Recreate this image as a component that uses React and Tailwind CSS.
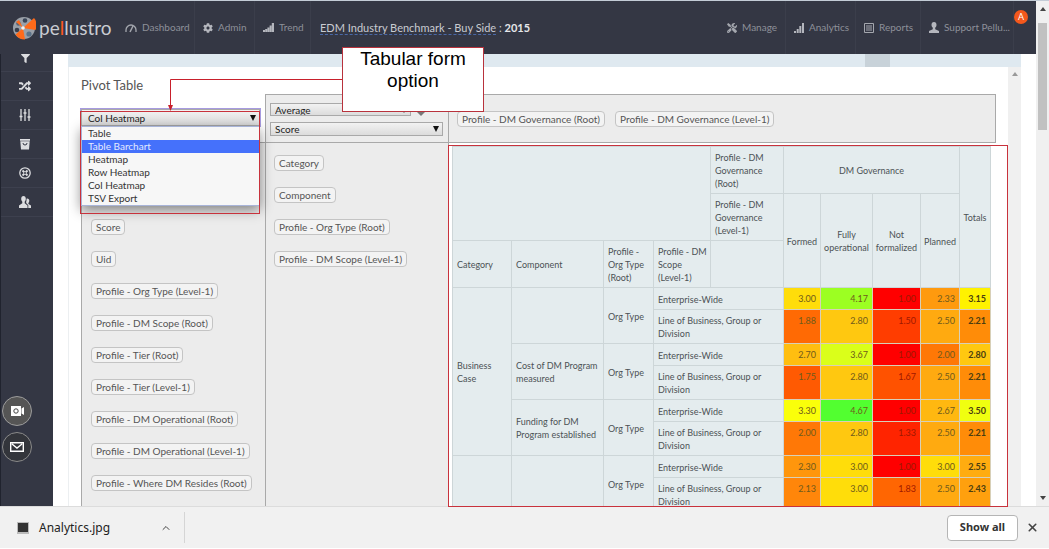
import React from "react";
import { FaFilter, FaRandom, FaCog, FaTools } from "react-icons/fa";
import { FiChevronUp, FiX } from "react-icons/fi";

const unusedAttributes = [
  "Score", "Uid", "Profile - Org Type (Level-1)", "Profile - DM Scope (Root)", "Profile - Tier (Root)",
  "Profile - Tier (Level-1)", "Profile - DM Operational (Root)", "Profile - DM Operational (Level-1)",
  "Profile - Where DM Resides (Root)",
];
const rowAttributes = ["Category", "Component", "Profile - Org Type (Root)", "Profile - DM Scope (Level-1)"];
const colAttributes = ["Profile - DM Governance (Root)", "Profile - DM Governance (Level-1)"];
const renderers = ["Table", "Table Barchart", "Heatmap", "Row Heatmap", "Col Heatmap", "TSV Export"];

const groups = [
  {
    category: { text: "Business Case", span: 6 }, component: "",
    a: [["3.00", "bg-[#ffdd0a]"], ["4.17", "bg-[#9cff22]"], ["1.00", "bg-[#ff0000]"], ["2.33", "bg-[#ff9a0e]"], ["3.15", "bg-[#fff200]"]],
    b: [["1.88", "bg-[#ff6a04]"], ["2.80", "bg-[#ffc810]"], ["1.50", "bg-[#ff3d00]"], ["2.50", "bg-[#ffaa10]"], ["2.21", "bg-[#ff8c08]"]],
  },
  {
    component: "Cost of DM Program measured",
    a: [["2.70", "bg-[#ffbe10]"], ["3.67", "bg-[#daff1a]"], ["1.00", "bg-[#ff0000]"], ["2.00", "bg-[#ff7806]"], ["2.80", "bg-[#ffc810]"]],
    b: [["1.75", "bg-[#ff5a02]"], ["2.80", "bg-[#ffc810]"], ["1.67", "bg-[#ff5200]"], ["2.50", "bg-[#ffaa10]"], ["2.21", "bg-[#ff8c08]"]],
  },
  {
    component: "Funding for DM Program established",
    a: [["3.30", "bg-[#faff0a]"], ["4.67", "bg-[#52ff30]"], ["1.00", "bg-[#ff0000]"], ["2.67", "bg-[#ffb810]"], ["3.50", "bg-[#f0ff10]"]],
    b: [["2.00", "bg-[#ff7806]"], ["2.80", "bg-[#ffc810]"], ["1.33", "bg-[#ff2400]"], ["2.50", "bg-[#ffaa10]"], ["2.21", "bg-[#ff8c08]"]],
  },
  {
    category: { text: "", span: 2 }, component: "",
    a: [["2.30", "bg-[#ff960c]"], ["3.00", "bg-[#ffdd0a]"], ["1.00", "bg-[#ff0000]"], ["3.00", "bg-[#ffdd0a]"], ["2.55", "bg-[#ffac10]"]],
    b: [["2.13", "bg-[#ff860a]"], ["3.00", "bg-[#ffdd0a]"], ["1.83", "bg-[#ff6602]"], ["2.50", "bg-[#ffaa10]"], ["2.43", "bg-[#ffa00e]"]],
  },
];

function Chip({ children }) {
  return (
    <span className="inline-block h-4 whitespace-nowrap rounded border border-[#c4c4c4] bg-[#f3f3f3] px-1 text-[10px] leading-[14px] text-[#555]">
      {children}
    </span>
  );
}

function SelectBox({ label, value, options, className, pad = "pl-1" }) {
  return (
    <div className={"relative " + className}>
      <select
        aria-label={label}
        defaultValue={value}
        className={"block h-full w-full appearance-none border border-[#a9a9a9] bg-linear-to-b from-[#f2f2f2] to-[#dcdcdc] text-[10px] leading-3 text-[#222] " + pad}
      >
        {options.map((o) => <option key={o}>{o}</option>)}
      </select>
      <svg viewBox="0 0 6 6" className="pointer-events-none absolute right-1 top-1/2 h-[6px] w-[6px] -translate-y-1/2">
        <path d="M0 0h6L3 6z" fill="#111" />
      </svg>
    </div>
  );
}

function Logo() {
  return (
    <a href="#home" aria-label="pellustro" className="flex items-center">
      <svg viewBox="0 0 24 24" className="h-6 w-6 shrink-0">
        <circle cx="12" cy="12" r="11" fill="#9aa0a8" />
        <circle cx="13" cy="4.500" r="2.300" fill="#3a4658" />
        <circle cx="6.500" cy="7.500" r="2.300" fill="#56657a" />
        <circle cx="5" cy="14" r="2.300" fill="#3a3f4c" />
        <circle cx="17" cy="18" r="2.600" fill="#5b7288" />
        <path d="M11 12L22 2a11 11 0 0 1 1.500 12z" fill="#ff6a1a" />
        <path d="M11 12L13 23.500a11 11 0 0 1-9.500-5z" fill="#ff6a1a" />
        <path d="M11 12L4 6l3-2z" fill="#ff6a1a" />
        <circle cx="11" cy="12" r="1.800" fill="#f4f4f4" />
      </svg>
      <span className="ml-[3px] text-[19px] leading-6 text-[#c9ccd2]">
        pe<span className="text-[#ff5a1f]">l</span>lustro
      </span>
    </a>
  );
}

function NavLink({ icon, children, className }) {
  return (
    <a href="#nav" className={"flex h-full items-center gap-[5px] whitespace-nowrap border-r border-[#3b3e4b] pl-2 text-[10px] text-[#8d9099] " + className}>
      {icon}
      {children}
    </a>
  );
}

function GaugeIcon() {
  return (
    <svg viewBox="0 0 12 10" className="h-[10px] w-3" fill="none" stroke="#a4a7ae">
      <path d="M1 9V7a5 5 0 0 1 10 0v2" strokeWidth="1.300" />
      <path d="M5 9l3-6" strokeWidth="1.500" />
    </svg>
  );
}

function TrendIcon() {
  return (
    <svg viewBox="0 0 11 9" className="h-[9px] w-[11px]" fill="#b4b6bd">
      <path d="M0 7h2v2H0zM2.200 6h2v3h-2zM4.400 4.500h2V9h-2zM6.600 2.500h2V9h-2zM8.800 0H11v9H8.800z" />
    </svg>
  );
}

function BarsIcon() {
  return (
    <svg viewBox="0 0 10 10" className="h-[10px] w-[10px]" fill="#b4b6bd">
      <path d="M0 8h2v2H0zM2.700 6h2v4h-2zM5.300 3h2v7h-2zM8 0h2v10H8z" />
    </svg>
  );
}

function ReportIcon() {
  return (
    <svg viewBox="0 0 10 10" className="h-[10px] w-[10px]" fill="none" stroke="#a4a7ae">
      <path d="M.5.5h9v9h-9zM2 3h6M2 5h6M2 7h6" />
    </svg>
  );
}

function PersonIcon() {
  return (
    <svg viewBox="0 0 10 11" className="h-[11px] w-[10px]" fill="#b4b6bd">
      <path d="M5 0c1.600 0 2.500 1.200 2.500 2.700C7.500 4 7 5 6.200 5.600v1.600L10 9v2H0V9l3.800-1.800V5.600C3 5 2.500 4 2.500 2.700 2.500 1.200 3.400 0 5 0z" />
    </svg>
  );
}

const sideIcons = [
  ["Filter", <FaFilter size={9} />],
  ["Shuffle", <FaRandom size={12} />],
  ["Settings", (
    <svg viewBox="0 0 12 12" className="h-3 w-3" stroke="currentColor" fill="none">
      <path d="M2 0v12M6 0v12M10 0v12M.5 7.500h3M4.500 4h3M8.500 8h3" strokeWidth="1.300" />
    </svg>
  )],
  ["Bucket", (
    <svg viewBox="0 0 12 12" className="h-3 w-3" fill="currentColor">
      <path d="M1 1h10v1.800H1zM1.300 3.200h9.400L10 11.500H2z" />
      <path d="M4 5a2 2 0 0 0 4 0" fill="none" stroke="#343744" />
    </svg>
  )],
  ["Explore", (
    <svg viewBox="0 0 12 12" className="h-3 w-3" fill="none" stroke="currentColor">
      <circle cx="6" cy="6" r="5.200" strokeWidth="1.300" />
      <path d="M3.500 3.500l5 5M8.500 3.500l-5 5" strokeWidth="1.800" />
      <circle cx="6" cy="6" r="1" fill="#343744" stroke="none" />
    </svg>
  )],
  ["Users", (
    <svg viewBox="0 0 12 12" className="h-3 w-3" fill="currentColor">
      <path d="M4.500 0C6 0 6.800 1.200 6.800 2.800c0 1.200-.5 2.300-1.100 2.900v1.500L8.500 9.500V12H0V9.500l3.300-2.300V5.700C2.700 5.100 2.200 4 2.200 2.800 2.200 1.200 3 0 4.500 0z" />
      <path d="M8.300 2.500c1.200 0 2 1 2 2.200 0 1-.4 1.700-.9 2.200v1l2.600 1.600V12H9.300V9.200L7.200 7V5.800c.4-.9.500-2 .3-3.100z" />
    </svg>
  )],
];

const th = "border border-[#cdd6d8] bg-[#e4ecee] px-1 pt-1 pb-[3px] text-left font-normal ";

function PivotCells({ values }) {
  return values.map(([v, bg], i) => (
    <td key={i} className={"border border-[#d8d0b8] px-1 pt-1 pb-[3px] text-right align-top " + bg + (i === 4 ? " font-bold text-[#4a3d10]" : i === 2 ? " text-[#a01800]" : " text-[#6f5a1c]")}>
      {v}
    </td>
  ));
}

function PivotTable() {
  return (
    <table className="w-full table-fixed border-collapse text-[9px] leading-[13px] text-[#4c5255]">
      <colgroup>
        <col className="w-[59px]" /><col className="w-[92px]" /><col className="w-[50px]" /><col className="w-[57px]" />
        <col className="w-[73px]" /><col className="w-[37px]" /><col className="w-[52px]" /><col className="w-[48px]" />
        <col className="w-[39px]" /><col className="w-[31px]" />
      </colgroup>
      <thead>
        <tr className="h-[47px]">
          <th colSpan={4} rowSpan={2} className={th} />
          <th className={th}>Profile - DM Governance (Root)</th>
          <th colSpan={4} className={th + "text-center!"}>DM Governance</th>
          <th rowSpan={3} className={th + "px-0! text-center!"}>Totals</th>
        </tr>
        <tr className="h-[47px]">
          <th className={th}>Profile - DM Governance (Level-1)</th>
          {["Formed", "Fully operational", "Not formalized", "Planned"].map((t) => (
            <th key={t} rowSpan={2} className={th + "px-0! text-center!"}>{t}</th>
          ))}
        </tr>
        <tr className="h-[47px]">
          <th className={th}>Category</th>
          <th className={th}>Component</th>
          <th className={th}>Profile - Org Type (Root)</th>
          <th className={th + "pr-0!"}>Profile - DM Scope (Level-1)</th>
          <th className={th} />
        </tr>
      </thead>
      <tbody>
        {groups.map((g, i) => (
          <React.Fragment key={i}>
            <tr className="h-[22px]">
              {g.category && <th rowSpan={g.category.span} className={th}>{g.category.text}</th>}
              <th rowSpan={2} className={th}>{g.component}</th>
              <th rowSpan={2} className={th}>Org Type</th>
              <th colSpan={2} className={th}>Enterprise-Wide</th>
              <PivotCells values={g.a} />
            </tr>
            <tr className="h-[34px]">
              <th colSpan={2} className={th}>Line of Business, Group or Division</th>
              <PivotCells values={g.b} />
            </tr>
          </React.Fragment>
        ))}
      </tbody>
    </table>
  );
}

export default function App() {
  return (
    <div className="relative flex h-screen flex-col overflow-hidden bg-white pb-px font-['Lato',sans-serif]">
      <div className="flex min-h-0 flex-1 border-t border-[#c3ccd6]">
        <div className="flex min-w-0 flex-1 flex-col">
          <header className="flex h-[53px] shrink-0 items-center bg-[#343744] pl-3">
            <div className="w-[105px]"><Logo /></div>
            <NavLink className="w-[78px]" icon={<GaugeIcon />}>Dashboard</NavLink>
            <NavLink className="w-[60px]" icon={<FaCog size={10} color="#b4b6bd" />}>Admin</NavLink>
            <NavLink className="w-[56px]" icon={<TrendIcon />}>Trend</NavLink>
            <div className="ml-[9px] whitespace-nowrap text-[11px] leading-3 text-[#c9cbd1]">
              <a href="#benchmark" className="border-b border-dashed border-[#4a69a8]">EDM Industry Benchmark - Buy Side</a>
              {" : "}<b className="text-[#e6e7ea]">2015</b>
            </div>
            <div className="ml-auto flex h-full">
              <NavLink className="w-[67px]" icon={<FaTools size={10} color="#a4a7ae" />}>Manage</NavLink>
              <NavLink className="w-[70px]" icon={<BarsIcon />}>Analytics</NavLink>
              <NavLink className="w-[65px]" icon={<ReportIcon />}>Reports</NavLink>
              <NavLink className="w-[93px]" icon={<PersonIcon />}>Support Pellu...</NavLink>
              <span className="mr-2 mt-[9px] flex h-[14px] w-[14px] items-center justify-center rounded-full bg-[#f4581c] text-[9px] text-white">A</span>
            </div>
          </header>
          <div className="flex min-h-0 flex-1">
            <nav className="flex w-[53px] shrink-0 flex-col border-l border-[#20232e] bg-[#343744] text-[#dcdde0]">
              {sideIcons.map(([name, icon], i) => (
                <button key={name} aria-label={name} className={"flex shrink-0 items-center justify-center border-b border-[#3d404e] pr-1 " + (i ? "h-[29px]" : "h-[18px] pb-2")}>
                  {icon}
                </button>
              ))}
              <div className="mb-11 ml-px mt-auto flex flex-col gap-[6px]">
                <button aria-label="Record" className="flex h-[30px] w-[30px] items-center justify-center rounded-full border border-[#9c9c9c] bg-[#555]">
                  <svg viewBox="0 0 14 12" className="h-3 w-[14px]">
                    <path d="M1 1h10v10H1zM11.500 3.500L14 2v8l-2.500-1.500z" fill="#fff" />
                    <circle cx="6" cy="6" r="2.200" fill="none" stroke="#444" />
                  </svg>
                </button>
                <button aria-label="Mail" className="flex h-[30px] w-[30px] items-center justify-center rounded-full border border-[#8a8a8a] bg-[#33353b]">
                  <svg viewBox="0 0 14 10" className="h-[10px] w-[14px]" fill="none" stroke="#fff" strokeWidth="1.400">
                    <path d="M.7.7h12.600v8.600H.7zM2 2l5 4 5-4" />
                  </svg>
                </button>
              </div>
            </nav>
            <main className="flex min-w-0 flex-1 flex-col pl-[15px] pr-[15px]">
              <div className="flex h-[13px] shrink-0 justify-end bg-[#dfe9f0] pr-[131px]">
                <div className="w-[25px] bg-[#c8d2d9]" />
              </div>
              <div className="flex min-h-0 flex-1 overflow-hidden border-l border-[#eceff1]">
                <div className="min-w-0 flex-1 pl-3 pr-3">
                  <h1 className="h-[27px] pt-2 text-[13px] leading-5 text-[#555]">Pivot Table</h1>
                  <div className="grid grid-cols-[184px_183px_1fr] grid-rows-[48px_auto]">
                    <div className="pt-[15px]">
                      <div className="relative z-10 w-[179px]">
                        <SelectBox label="Renderer" value="Col Heatmap" options={renderers} pad="pl-[6px]" className="h-[17px] outline outline-[#a79be0]" />
                        <ul role="listbox" aria-label="Renderers" className="absolute left-0 top-[17px] w-full border border-[#a8b4d8] bg-[#f7f7f7] text-[10px] leading-[13px] text-[#333] shadow-[0_4px_12px_rgba(0,0,0,0.45)]">
                          {renderers.map((r) => (
                            <li key={r} role="option" aria-selected={r === "Table Barchart"} className={"pl-[6px] " + (r === "Table Barchart" ? "bg-[#4571fb] text-[#e4eaff]" : "")}>{r}</li>
                          ))}
                        </ul>
                      </div>
                    </div>
                    <div className="flex flex-col gap-[6px] border-l border-t border-[#a9a9a9] bg-[#ececec] pl-1 pt-2">
                      <div className="flex items-center gap-[6px]">
                        <SelectBox label="Aggregator" value="Average" options={["Average", "Count", "Sum"]} className="h-[13px] w-[141px]" />
                        <svg viewBox="0 0 8 12" className="h-3 w-2"><path d="M0 8h8l-4 4z" fill="#777" /></svg>
                      </div>
                      <SelectBox label="Value" value="Score" options={["Score", "Uid"]} className="h-[14px] w-[173px]" />
                    </div>
                    <div className="flex items-start gap-[10px] border-x border-t border-[#a9a9a9] bg-[#ececec] pl-2 pt-4">
                      {colAttributes.map((a) => <Chip key={a}>{a}</Chip>)}
                    </div>
                    <div className="flex flex-col items-start gap-4 border-l border-t border-[#a9a9a9] bg-[#ececec] pl-[9px] pt-[76px]">
                      {unusedAttributes.map((a) => <Chip key={a}>{a}</Chip>)}
                    </div>
                    <div className="flex flex-col items-start gap-4 border-l border-t border-[#a9a9a9] bg-[#ececec] pl-2 pt-3">
                      {rowAttributes.map((a) => <Chip key={a}>{a}</Chip>)}
                    </div>
                    <div className="border-l border-t border-[#a9a9a9] pl-[3px] pr-[5px] pt-[3px]">
                      <PivotTable />
                    </div>
                  </div>
                </div>
                <div className="flex w-[13px] shrink-0 justify-center bg-[#f0f0f0] pt-[5px]">
                  <svg viewBox="0 0 6 4" className="h-1 w-[6px]"><path d="M0 4h6L3 0z" fill="#999" /></svg>
                </div>
              </div>
            </main>
          </div>
        </div>
        <div className="flex w-[13px] shrink-0 flex-col items-center bg-[#f0f0f0] py-[6px]">
          <svg viewBox="0 0 6 4" className="h-1 w-[6px]"><path d="M0 4h6L3 0z" fill="#444" /></svg>
          <div className="mt-3 h-[107px] w-[9px] bg-[#c1c1c1]" />
          <svg viewBox="0 0 6 4" className="mt-auto h-1 w-[6px]"><path d="M0 0h6L3 4z" fill="#444" /></svg>
        </div>
      </div>

      <footer className="relative z-20 flex h-[42px] shrink-0 items-center border-t border-[#dcdcdc] bg-[#f1f1f1] pl-[17px] pr-[10px] font-['Noto_Sans',sans-serif]">
        <svg viewBox="0 0 12 12" className="mr-[10px] h-3 w-3"><path d="M0 0h12v12H0z" fill="#bbb" /><path d="M1 1h10v9H1z" fill="#333" /></svg>
        <span className="w-[121px] text-[12px] text-[#222]">Analytics.jpg</span>
        <button aria-label="Download options" className="text-[#444]"><FiChevronUp size={12} /></button>
        <div className="ml-3 h-[31px] border-r border-[#d5d5d5]" />
        <button className="ml-auto h-[26px] w-[71px] rounded-sm border border-[#b5b5b5] bg-white text-[11px] font-bold text-[#333]">Show all</button>
        <button aria-label="Close" className="ml-2 text-[#444]"><FiX size={13} strokeWidth={3} /></button>
      </footer>

      <div className="pointer-events-none absolute left-[80px] top-[111px] z-20 h-[103px] w-[180px] border border-[#c8323c]" />
      <div className="pointer-events-none absolute left-[448px] top-[145px] z-30 h-[362px] w-[560px] border border-[#c8323c]" />
      <svg viewBox="0 0 176 34" className="pointer-events-none absolute left-[167px] top-[78px] z-20 h-[34px] w-[176px]">
        <path d="M176 1.500H3.500V28" fill="none" stroke="#c8202c" />
        <path d="M1 27h5l-2.500 6z" fill="#c8202c" />
      </svg>
      <div className="absolute left-[342px] top-[47px] z-30 h-[65px] w-[142px] border border-[#b8323c] bg-white text-center font-['Liberation_Sans',sans-serif] text-[19px] leading-[22px] text-black">
        Tabular form<br />option
      </div>
    </div>
  );
}
